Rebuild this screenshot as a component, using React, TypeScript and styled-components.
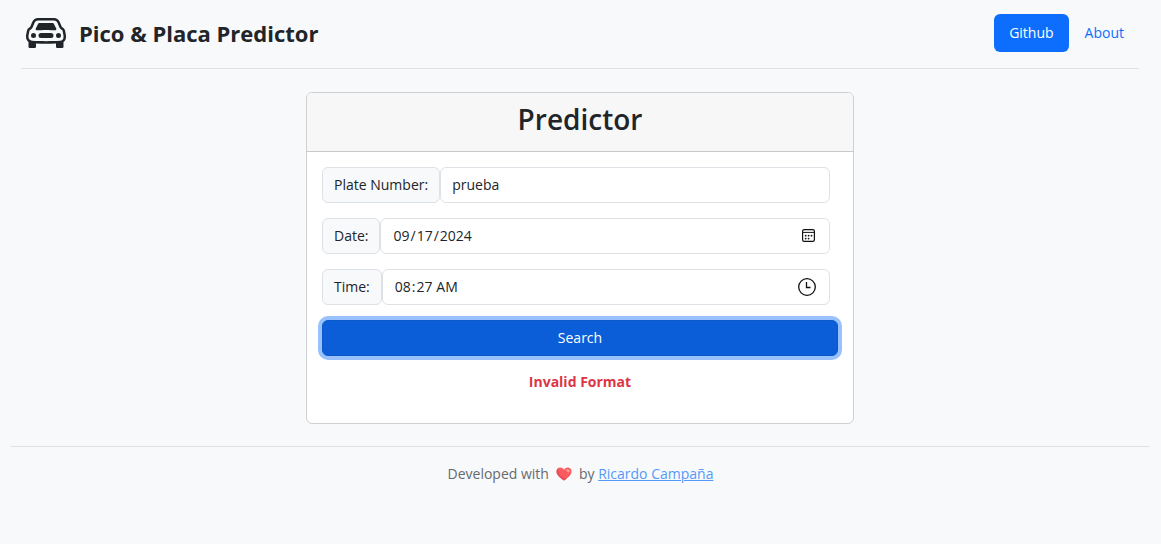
import React, { useState } from "react";
import styled, { createGlobalStyle, css } from "styled-components";

const GlobalStyle = createGlobalStyle`
  *, *::before, *::after { box-sizing: border-box; }
  body {
    margin: 0;
    background: #f8f9fb;
    color: #212529;
    font-family: "Segoe UI", "Open Sans", "Noto Sans", sans-serif;
    font-size: 14px;
    line-height: 22px;
  }
`;

const Page = styled.div`
  margin: 0 22px 0 21px;
`;

const Header = styled.header`
  display: flex;
  flex-wrap: wrap;
  align-items: center;
  justify-content: space-between;
  margin-bottom: 23px;
  padding: 13px 0 15px;
  border-bottom: 1px solid #dee2e6;
`;

const Brand = styled.a`
  display: flex;
  align-items: center;
  gap: 13px;
  margin-left: 5px;
  color: inherit;
  font-size: 22px;
  font-weight: 700;
  text-decoration: none;
`;

const Nav = styled.nav`
  display: flex;
  gap: 1px;
`;

const NavLink = styled.a<{ $active?: boolean }>`
  padding: 8px 15px;
  border-radius: 6px;
  color: ${(p) => (p.$active ? "#fff" : "#0d6efd")};
  background: ${(p) => (p.$active ? "#0d6efd" : "transparent")};
  text-decoration: none;
`;

const Card = styled.main`
  width: calc(50% - 11px);
  min-width: 320px;
  margin: 0 auto;
  border: 1px solid #cfd0d2;
  border-radius: 6px;
  background: #fff;
`;

const CardHeader = styled.div`
  padding: 8px 15px 14px;
  border-bottom: 1px solid #c8c9ca;
  border-radius: 5px 5px 0 0;
  background: #f7f7f7;
`;

const CardTitle = styled.h1`
  margin: 0;
  font-size: 28px;
  font-weight: 600;
  line-height: 36px;
  text-align: center;
`;

const Form = styled.form`
  display: flex;
  flex-direction: column;
  gap: 15px;
  padding: 15px;
`;

const Row = styled.div`
  display: flex;
  margin-right: 8px;
`;

const box = css`
  height: 36px;
  padding: 6px 11px;
  border: 1px solid #dee2e6;
  border-radius: 6px;
`;

const Label = styled.label`
  ${box}
  flex: none;
  background: #f8f9fb;
`;

const Control = styled.div`
  ${box}
  display: flex;
  flex: 1;
  align-items: center;
  min-width: 0;
  padding-right: 13px;
  background: #fff;
`;

const Input = styled.input`
  flex: 1;
  min-width: 0;
  height: 22px;
  padding: 0;
  border: 0;
  outline: 0;
  background: transparent;
  color: inherit;
  font: inherit;

  &::-webkit-calendar-picker-indicator {
    display: none;
  }
  &::-webkit-datetime-edit,
  &::-webkit-datetime-edit-fields-wrapper {
    padding: 0;
  }
`;

const SearchButton = styled.button`
  height: 36px;
  border: 1px solid #0a58ca;
  border-radius: 6px;
  background: #0b5ed7;
  box-shadow: 0 0 0 4px #98c1fe;
  color: #fff;
  font: inherit;
  cursor: pointer;
`;

const ErrorText = styled.p`
  min-height: 22px;
  margin: 0 0 15px;
  color: #dc3545;
  font-weight: 700;
  text-align: center;
`;

const Footer = styled.footer`
  display: flex;
  align-items: center;
  justify-content: center;
  gap: 7px;
  margin: 22px 11px 0;
  padding: 16px 0;
  border-top: 1px solid #dee2e6;
  color: #66696d;
`;

const AuthorLink = styled.a`
  color: #5599fc;
`;

const CarIcon = () => (
  <svg width="40" height="40" viewBox="0 0 16 16" fill="currentColor" aria-hidden="true">
    <path d="M4 9a1 1 0 1 1-2 0 1 1 0 0 1 2 0m10 0a1 1 0 1 1-2 0 1 1 0 0 1 2 0M6 8a1 1 0 0 0 0 2h4a1 1 0 1 0 0-2zM4.862 4.276 3.906 6.19a.51.51 0 0 0 .497.731c.91-.073 2.35-.17 3.597-.17s2.688.097 3.597.17a.51.51 0 0 0 .497-.731l-.956-1.913A.5.5 0 0 0 10.691 4H5.309a.5.5 0 0 0-.447.276" />
    <path
      fillRule="evenodd"
      d="M2.52 3.515A2.5 2.5 0 0 1 4.82 2h6.362c1 0 1.904.596 2.298 1.515l.792 1.848c.075.175.21.319.38.404.5.25.855.715.965 1.262l.335 1.679q.05.242.049.49v.413c0 .814-.39 1.543-1 1.997V13.5a.5.5 0 0 1-.5.5h-2a.5.5 0 0 1-.5-.5v-1.338c-1.292.048-2.745.088-4 .088s-2.708-.04-4-.088V13.5a.5.5 0 0 1-.5.5h-2a.5.5 0 0 1-.5-.5v-1.892c-.61-.454-1-1.183-1-1.997v-.413a2.5 2.5 0 0 1 .049-.49l.335-1.68c.11-.546.465-1.012.964-1.261a.8.8 0 0 0 .381-.404l.792-1.848ZM4.82 3a1.5 1.5 0 0 0-1.379.91l-.792 1.847a1.8 1.8 0 0 1-.853.904.8.8 0 0 0-.43.564L1.03 8.904a1.5 1.5 0 0 0-.03.294v.413c0 .796.62 1.448 1.408 1.484 1.555.07 3.786.155 5.592.155s4.037-.084 5.592-.155A1.48 1.48 0 0 0 15 9.611v-.413q0-.148-.03-.294l-.335-1.68a.8.8 0 0 0-.43-.563 1.8 1.8 0 0 1-.853-.904l-.792-1.848A1.5 1.5 0 0 0 11.18 3z"
    />
  </svg>
);

const CalendarIcon = () => (
  <svg width="14" height="14" viewBox="0 0 14 14" fill="none" aria-hidden="true">
    <rect x="0.6" y="0.6" width="11.8" height="11.8" rx="1.6" stroke="#111" strokeWidth="1.2" />
    <path d="M1 3.4H12" stroke="#111" />
    <g fill="#111">
      <circle cx="3.700" cy="6.700" r="0.9" />
      <circle cx="6.600" cy="6.700" r="0.9" />
      <circle cx="9.500" cy="6.700" r="0.9" />
      <circle cx="3.700" cy="9.600" r="0.9" />
      <circle cx="6.600" cy="9.600" r="0.9" />
    </g>
  </svg>
);

const ClockIcon = () => (
  <svg width="18" height="18" viewBox="0 0 18 18" fill="none" stroke="#111" aria-hidden="true">
    <circle cx="9" cy="9" r="8.3" strokeWidth="1.3" />
    <path d="M8.5 4V9.5H12.5" strokeWidth="1.3" />
  </svg>
);

const HeartIcon = () => (
  <svg width="16" height="14" viewBox="0 0 16 14" role="img" aria-label="love">
    <path d="M8 13.6C5 11.6.5 8.5.5 4.6.5 2.2 2.200.6 4.300.6 5.900.6 7.300 1.500 8 2.900 8.700 1.500 10.100.6 11.700.6c2.100 0 3.800 1.600 3.800 4C15.500 8.500 11 11.600 8 13.600Z" fill="#fb5b5f" />
    <path d="M.5 4.6C.5 8.5 5 11.6 8 13.6c.8-.5 1.700-1.100 2.600-1.900C5.800 10.500 2.500 7.500 2.200 1.400 1.200 2.100.5 3.200.5 4.600Z" fill="#e8505f" />
    <ellipse cx="11.900" cy="3.700" rx="2" ry="1.400" transform="rotate(35 11.900 3.700)" fill="#ff9a91" />
  </svg>
);

export default function App() {
  const [plate, setPlate] = useState("prueba");
  const [date, setDate] = useState("2024-09-17");
  const [time, setTime] = useState("08:27");
  const [error, setError] = useState("Invalid Format");

  const search = (event: React.FormEvent) => {
    event.preventDefault();
    setError(/^[A-Z]{3}-?\d{3,4}$/i.test(plate) ? "" : "Invalid Format");
  };

  return (
    <>
      <GlobalStyle />
      <Page>
        <Header>
          <Brand href="#">
            <CarIcon />
            <span>Pico &amp; Placa Predictor</span>
          </Brand>
          <Nav>
            <NavLink href="#github" $active>Github</NavLink>
            <NavLink href="#about">About</NavLink>
          </Nav>
        </Header>
        <Card>
          <CardHeader>
            <CardTitle>Predictor</CardTitle>
          </CardHeader>
          <Form onSubmit={search}>
            <Row>
              <Label htmlFor="plate">Plate Number:</Label>
              <Control>
                <Input id="plate" type="text" value={plate} onChange={(e) => setPlate(e.target.value)} />
              </Control>
            </Row>
            <Row>
              <Label htmlFor="date">Date:</Label>
              <Control>
                <Input id="date" type="date" value={date} onChange={(e) => setDate(e.target.value)} />
                <CalendarIcon />
              </Control>
            </Row>
            <Row>
              <Label htmlFor="time">Time:</Label>
              <Control>
                <Input id="time" type="time" value={time} onChange={(e) => setTime(e.target.value)} />
                <ClockIcon />
              </Control>
            </Row>
            <SearchButton type="submit">Search</SearchButton>
            <ErrorText role="alert">{error}</ErrorText>
          </Form>
        </Card>
      </Page>
      <Footer>
        <span>Developed with</span>
        <HeartIcon />
        <span>
          by <AuthorLink href="#author">Ricardo Campaña</AuthorLink>
        </span>
      </Footer>
    </>
  );
}
